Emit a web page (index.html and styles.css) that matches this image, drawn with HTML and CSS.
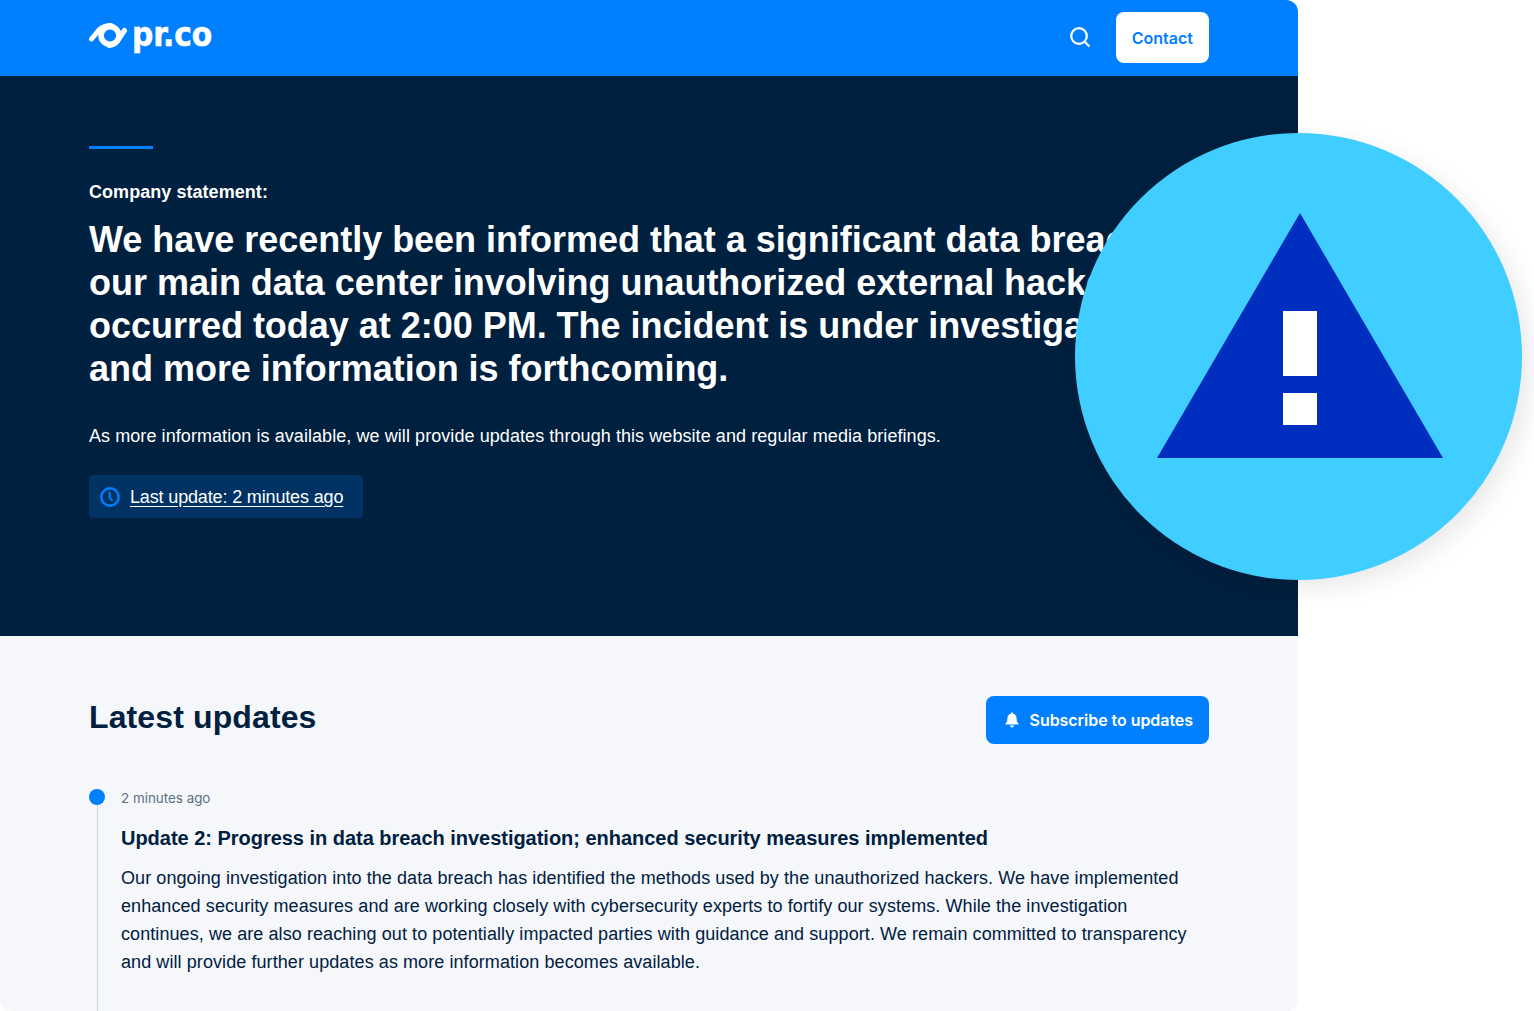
FILE: index.html
```html
<!DOCTYPE html>
<html lang="en">
<head>
<meta charset="utf-8">
<title>pr.co – Company statement</title>
<link rel="stylesheet" href="styles.css">
</head>
<body>
<div class="page">
  <header class="topbar">
    <a class="logo" href="#">
      <svg class="logo-eye" width="40" height="26" viewBox="0 0 40 26" aria-hidden="true">
        <circle cx="22" cy="12.5" r="8.9" fill="none" stroke="#fff" stroke-width="5.6"/>
        <path d="M3.5 16 L11 7 Q16 2.6 23 2.6" fill="none" stroke="#fff" stroke-width="5" stroke-linecap="round"/>
        <path d="M36.5 7.5 L29.5 18 Q26 22 21 22.4" fill="none" stroke="#fff" stroke-width="5" stroke-linecap="round"/>
      </svg>
      <span class="logo-text">pr.co</span>
    </a>
    <div class="topbar-actions">
      <svg class="search-icon" width="22" height="22" viewBox="0 0 22 22" aria-hidden="true">
        <circle cx="10" cy="10" r="7.8" fill="none" stroke="#fff" stroke-width="2.2"/>
        <path d="M15.7 15.7 L20.5 20.5" stroke="#fff" stroke-width="2.2"/>
      </svg>
      <a class="btn btn-contact" href="#">Contact</a>
    </div>
  </header>

  <section class="hero">
    <div class="accent"></div>
    <p class="eyebrow">Company statement:</p>
    <h1 class="statement">We have recently been informed that a significant data breach at our main data center involving unauthorized external hackers occurred today at 2:00 PM. The incident is under investigation and more information is forthcoming.</h1>
    <p class="lead">As more information is available, we will provide updates through this website and regular media briefings.</p>
    <a class="last-update" href="#">
      <svg width="20" height="20" viewBox="0 0 20 20" aria-hidden="true">
        <circle cx="10" cy="10" r="8.7" fill="none" stroke="#007fff" stroke-width="2.4"/>
        <path d="M9.6 5 V10.6 L12.4 13.6" fill="none" stroke="#007fff" stroke-width="2"/>
      </svg>
      <span class="last-update-text">Last update: 2 minutes ago</span>
    </a>
  </section>

  <main class="updates">
    <div class="updates-head">
      <h2 class="updates-title">Latest updates</h2>
      <a class="btn btn-subscribe" href="#">
        <svg width="16" height="16" viewBox="0 0 16 16" aria-hidden="true">
          <path d="M8 0.6 C8.7 0.6 9.2 1.1 9.2 1.8 C11.4 2.3 12.6 4.1 12.6 6.4 C12.6 9 13.2 10.2 14.4 11.4 C14.8 11.9 14.5 12.6 13.8 12.6 H2.2 C1.5 12.6 1.2 11.9 1.6 11.4 C2.8 10.2 3.4 9 3.4 6.4 C3.4 4.1 4.6 2.3 6.8 1.8 C6.8 1.1 7.3 0.6 8 0.6 Z M6 13.6 H10 C10 14.7 9.1 15.5 8 15.5 C6.9 15.5 6 14.7 6 13.6 Z" fill="#fff"/>
        </svg>
        <span>Subscribe to updates</span>
      </a>
    </div>
    <article class="entry">
      <span class="entry-dot"></span>
      <p class="entry-time">2 minutes ago</p>
      <h3 class="entry-title">Update 2: Progress in data breach investigation; enhanced security measures implemented</h3>
      <p class="entry-body">Our ongoing investigation into the data breach has identified the methods used by the unauthorized hackers. We have implemented enhanced security measures and are working closely with cybersecurity experts to fortify our systems. While the investigation continues, we are also reaching out to potentially impacted parties with guidance and support. We remain committed to transparency and will provide further updates as more information becomes available.</p>
    </article>
  </main>

  <div class="alert-badge">
    <svg width="286" height="245" viewBox="0 0 286 245" aria-hidden="true">
      <path d="M143 0 L286 245 H0 Z" fill="#002ebe"/>
      <rect x="126" y="98" width="34" height="65" fill="#fff"/>
      <rect x="126" y="180" width="34" height="32" fill="#fff"/>
    </svg>
  </div>
</div>
</body>
</html>
```
FILE: styles.css
```css
* { box-sizing: border-box; }
html, body { margin: 0; padding: 0; height: 1011px; overflow: hidden; background: #fff; }
body { font-family: "Liberation Sans", Arial, sans-serif; color: #00203f; }
a { text-decoration: none; }
p, h1, h2, h3 { margin: 0; }

.page { width: 1534px; height: 1011px; position: relative; overflow: hidden; }

.topbar {
  width: 1298px; height: 76px; padding: 0 89px 1px;
  display: flex; align-items: center; justify-content: space-between;
  background: #007fff; border-top-right-radius: 12px;
}
.logo { display: flex; align-items: center; gap: 4px; color: #fff; padding-bottom: 3px; }
.logo-eye { display: block; margin-left: -1px; }
.logo-text {
  font-family: "DejaVu Sans", sans-serif; font-weight: 700; font-stretch: condensed; font-size: 33px; line-height: 36px;
  letter-spacing: -0.1px; color: #fff; -webkit-text-stroke: 0.5px #fff; transform: translateY(-1px);
}
.topbar-actions { display: flex; align-items: center; gap: 25px; }
.search-icon { display: block; margin-bottom: 2px; }
.btn { display: flex; align-items: center; border-radius: 8px; font-weight: 600; font-size: 16px; font-family: "Inter", sans-serif; }
.btn-contact { height: 51px; padding: 0 16px; background: #fff; color: #007fff; }

.hero { width: 1298px; height: 560px; padding: 70px 89px 0; background: #00203f; color: #fff; }
.accent { width: 64px; height: 3px; background: #007fff; }
.eyebrow { margin-top: 31px; font-size: 18px; line-height: 24px; font-weight: 700; letter-spacing: 0.05px; }
.statement { margin-top: 14px; width: 1120px; font-size: 36px; line-height: 43px; font-weight: 700; letter-spacing: -0.02px; }
.lead { margin-top: 32px; font-size: 18px; line-height: 28px; letter-spacing: 0.07px; }
.last-update {
  margin-top: 25px; display: inline-flex; align-items: center; gap: 10px; height: 43px; padding: 0 20px 0 11px;
  background: #003264; border-radius: 4px; color: #fff; font-size: 18px; letter-spacing: -0.15px;
}
.last-update svg { display: block; }
.last-update-text { padding-top: 2px; text-decoration: underline; text-underline-offset: 3px; }

.updates {
  width: 1298px; height: 375px; padding: 60px 89px 0; background: #f5f7fb;
  border-bottom-left-radius: 12px; border-bottom-right-radius: 12px;
}
.updates-head { display: flex; align-items: flex-start; justify-content: space-between; }
.updates-title { font-size: 32px; line-height: 42px; font-weight: 700; color: #00203f; letter-spacing: 0.12px; }
.btn-subscribe { height: 48px; padding: 0 16px 0 18px; gap: 10px; background: #007fff; color: #fff; letter-spacing: -0.05px; }
.btn-subscribe svg { display: block; }

.entry { position: relative; margin-top: 45px; height: 222px; padding-left: 32px; }
.entry::before {
  content: ""; position: absolute; left: 8px; top: 16px; bottom: 0; width: 1px; background: #d0d5dd;
}
.entry-dot { position: absolute; left: 0; top: 0; width: 16px; height: 16px; border-radius: 50%; background: #007fff; }
.entry-time { font-family: "Inter", sans-serif; font-size: 13.4px; line-height: 18px; color: #5d6f85; }
.entry-title { margin-top: 18px; font-size: 20px; line-height: 26px; font-weight: 700; color: #00203f; letter-spacing: -0.025px; }
.entry-body { margin-top: 13px; font-size: 18px; line-height: 28px; color: #00203f; letter-spacing: 0.08px; }

.alert-badge {
  position: absolute; left: 1075px; top: 133px; width: 447px; height: 447px; border-radius: 50%;
  background: #40cdff; box-shadow: 8px 8px 24px rgba(0,0,0,.09);
  display: flex; justify-content: center; padding-top: 80px; padding-left: 3px;
}
.alert-badge svg { display: block; }
```
